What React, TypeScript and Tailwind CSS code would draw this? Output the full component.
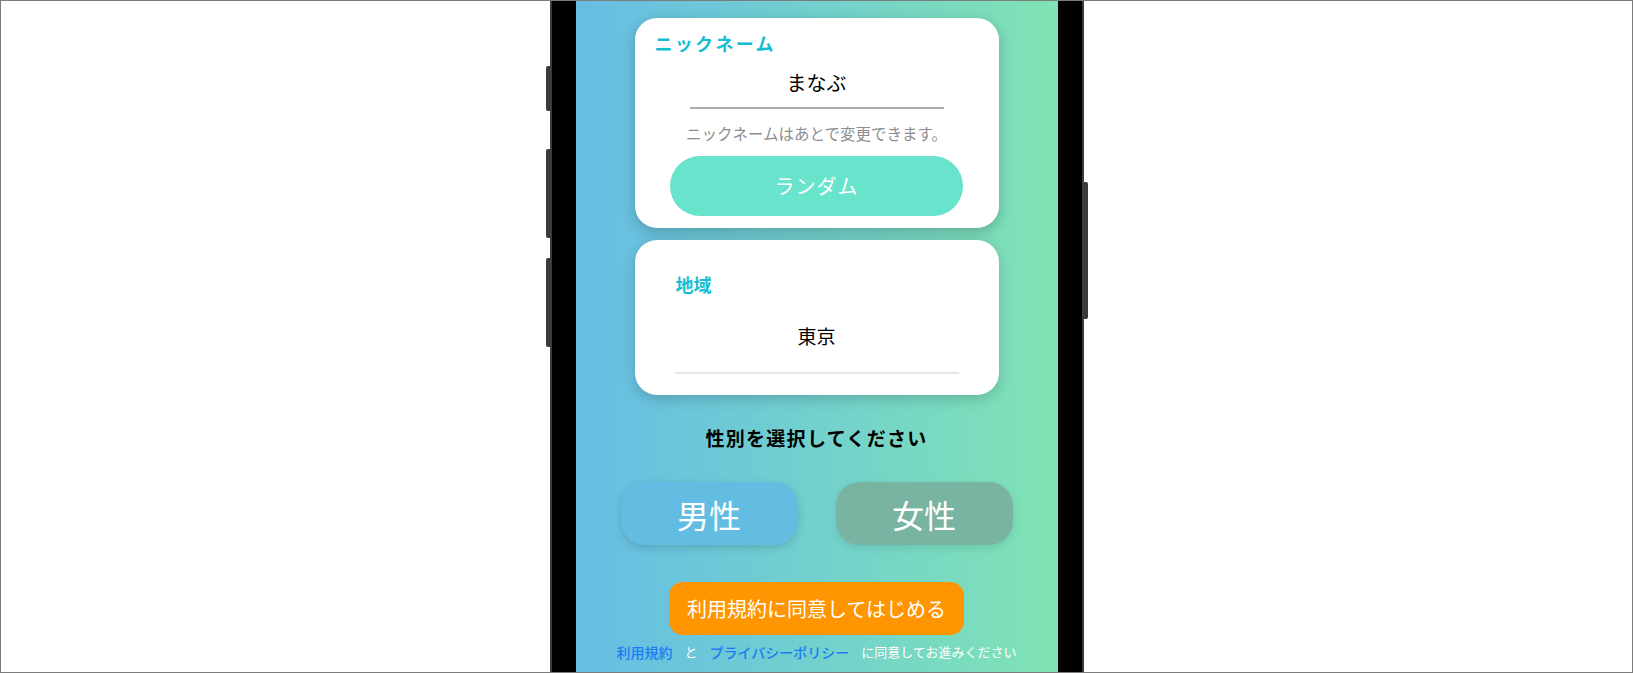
import { FC } from "react"

const Card1: FC = () => {
  return (
    <div className="mt-[17px] w-[364px] h-[210px] shrink-0 rounded-[22px] bg-white shadow-[0_4px_14px_rgba(0,0,0,0.22)] flex flex-col">
      <div className="pl-[20px] pt-[12px] text-[18px] leading-[26px] font-bold text-[#17bed2] tracking-[2.3px]">
        ニックネーム
      </div>
      <div className="mt-[13px] text-center text-[20px] leading-[28px] text-black">まなぶ</div>
      <div className="mt-[10px] self-center h-[2px] w-[254px] bg-[#ababab]" />
      <div className="mt-[14px] text-center text-[15.5px] leading-[20px] text-[#8d8d8d]">
        ニックネームはあとで変更できます。
      </div>
      <button className="mt-[13px] self-center h-[60px] w-[293px] rounded-full bg-[#68e4cc] text-white text-[20px] tracking-[1px]">
        ランダム
      </button>
    </div>
  )
}

const Card2: FC = () => {
  return (
    <div className="mt-[12px] w-[364px] h-[155px] shrink-0 rounded-[22px] bg-white shadow-[0_4px_14px_rgba(0,0,0,0.18)] flex flex-col">
      <div className="pl-[41px] pt-[31px] text-[18px] leading-[26px] font-bold text-[#17bed2]">地域</div>
      <div className="mt-[25px] text-center text-[19px] leading-[28px] text-black">東京</div>
      <div className="mt-[22px] mx-[40px] h-[2px] bg-[#e6e6e6]" />
    </div>
  )
}

const Screen: FC = () => {
  return (
    <div className="w-[482px] h-full bg-linear-to-r from-[#66bde4] to-[#80e3b3] flex flex-col items-center">
      <Card1 />
      <Card2 />
      <div className="mt-[29px] text-[19px] leading-[28px] font-bold text-black tracking-[1.3px]">
        性別を選択してください
      </div>
      <div className="mt-[30px] flex gap-[38px]">
        <button className="w-[177px] h-[63px] rounded-[24px] bg-[#63bde3] text-white text-[32px] shadow-[0_3px_8px_rgba(0,0,0,0.15)]">
          男性
        </button>
        <button className="w-[177px] h-[63px] rounded-[24px] bg-[#79b4a2] text-white text-[32px] shadow-[0_3px_8px_rgba(0,0,0,0.1)]">
          女性
        </button>
      </div>
      <button className="mt-[37px] w-[295px] h-[53px] shrink-0 rounded-[14px] bg-[#ff9500] text-white text-[20px]">
        利用規約に同意してはじめる
      </button>
      <div className="mt-[8px] flex items-center gap-[12px] leading-[18px] whitespace-nowrap">
        <span className="text-[14px] font-medium text-[#1c7cf3]">利用規約</span>
        <span className="text-[13px] text-white">と</span>
        <span className="text-[14px] font-medium text-[#1c7cf3]">プライバシーポリシー</span>
        <span className="text-[13px] text-white">に同意してお進みください</span>
      </div>
    </div>
  )
}

const App: FC = () => {
  return (
    <div className="w-[1633px] h-[673px] border border-[#7c7c7c] bg-white flex justify-center overflow-hidden font-['Noto_Sans_CJK_JP','Noto_Sans',sans-serif]">
      <div className="flex h-full">
        <div className="w-[4px] flex flex-col">
          <div className="mt-[65px] h-[45px] w-[4px] rounded-l-[2px] bg-[#3a3a3a]" />
          <div className="mt-[38px] h-[89px] w-[4px] rounded-l-[2px] bg-[#3a3a3a]" />
          <div className="mt-[20px] h-[89px] w-[4px] rounded-l-[2px] bg-[#3a3a3a]" />
        </div>
        <div className="h-full bg-black border-x-2 border-[#3c3c3c] px-[24px]">
          <Screen />
        </div>
        <div className="w-[4px] flex flex-col">
          <div className="mt-[181px] h-[137px] w-[4px] rounded-r-[2px] bg-[#3a3a3a]" />
        </div>
      </div>
    </div>
  )
}

export default App
